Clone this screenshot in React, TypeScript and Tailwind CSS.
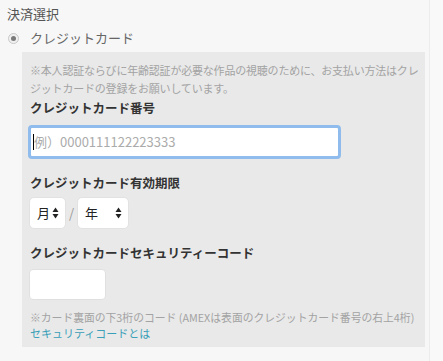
import React from "react";

const jp = { fontFamily: '"Noto Sans CJK JP", "Noto Sans", sans-serif' };

function SelectArrows() {
  return (
    <svg width="7" height="12" viewBox="0 0 7 12" className="text-[#222]">
      <path d="M3.5 0.5 L6.5 5 H0.5 Z" fill="currentColor" />
      <path d="M3.5 11.5 L6.5 7 H0.5 Z" fill="currentColor" />
    </svg>
  );
}

function FakeSelect({ label, width }: { label: string; width: string }) {
  return (
    <div
      className={`${width} h-[32px] flex items-center justify-between pl-[7px] pr-[6px] bg-white rounded-[5px] border border-[#e2e2e2] text-[13px] text-[#222]`}
    >
      <span>{label}</span>
      <SelectArrows />
    </div>
  );
}

export default function App() {
  return (
    <div className="w-[443px] h-[361px] flex bg-[#f7f7f7] overflow-hidden" style={jp}>
      <div className="w-[429px] flex flex-col">
        {/* Heading */}
        <div className="pt-[5px] pl-[7px] text-[13px] leading-[18px] text-[#555]">決済選択</div>

        {/* Radio */}
        <div className="mt-[6px] flex items-center h-[18px] pl-[8px]">
          <span className="w-[11px] h-[11px] rounded-full border border-[#c9c9c9] bg-[#f0f0f0] grid place-items-center">
            <span className="w-[5px] h-[5px] rounded-full bg-[#7a7a7a]" />
          </span>
          <span className="ml-[11px] text-[13px] text-[#666]">クレジットカード</span>
        </div>

        {/* Card panel */}
        <div className="mt-[5px] ml-[22px] w-[403px] bg-[#e9e9e9] pt-[9px] pb-[6px] pl-[8px] pr-[4px]">
          <p className="text-[11px] leading-[18px] text-[#a3a3a3] tracking-[-0.2px]">
            ※本人認証ならびに年齢認証が必要な作品の視聴のために、お支払い方法はクレジットカードの登録をお願いしています。
          </p>

          <div className="mt-[2px] text-[12.5px] leading-[18px] font-bold text-[#333]">クレジットカード番号</div>
          <div className="mt-[8px] -ml-[2px] w-[313px] h-[34px] bg-white rounded-[4px] border-[3px] border-[#8fbcec] flex items-center pl-[2px]">
            <span className="w-[1px] h-[16px] bg-black" />
            <span className="text-[13px] text-[#ababab]">例）0000111122223333</span>
          </div>

          <div className="mt-[15px] text-[12.5px] leading-[18px] font-bold text-[#333]">クレジットカード有効期限</div>
          <div className="mt-[5px] -ml-[1px] flex items-center">
            <FakeSelect label="月" width="w-[37px]" />
            <span className="mx-[3px] text-[13px] text-[#999]">/</span>
            <FakeSelect label="年" width="w-[52px]" />
          </div>

          <div className="mt-[15px] text-[12.5px] leading-[18px] font-bold text-[#333]">
            クレジットカードセキュリティーコード
          </div>
          <div className="mt-[7px] -ml-[1px] w-[77px] h-[31px] bg-white rounded-[4px] border border-[#e0e0e0]" />

          <p className="mt-[9px] text-[10.8px] leading-[16px] text-[#a3a3a3]">
            ※カード裏面の下3桁のコード (AMEXは表面のクレジットカード番号の右上4桁)
          </p>
          <a className="block text-[11px] leading-[16px] text-[#3a9fb8]">セキュリティコードとは</a>
        </div>
      </div>
      <div className="flex-1 border-l border-[#ececec] bg-[#f9f9f9]" />
    </div>
  );
}
